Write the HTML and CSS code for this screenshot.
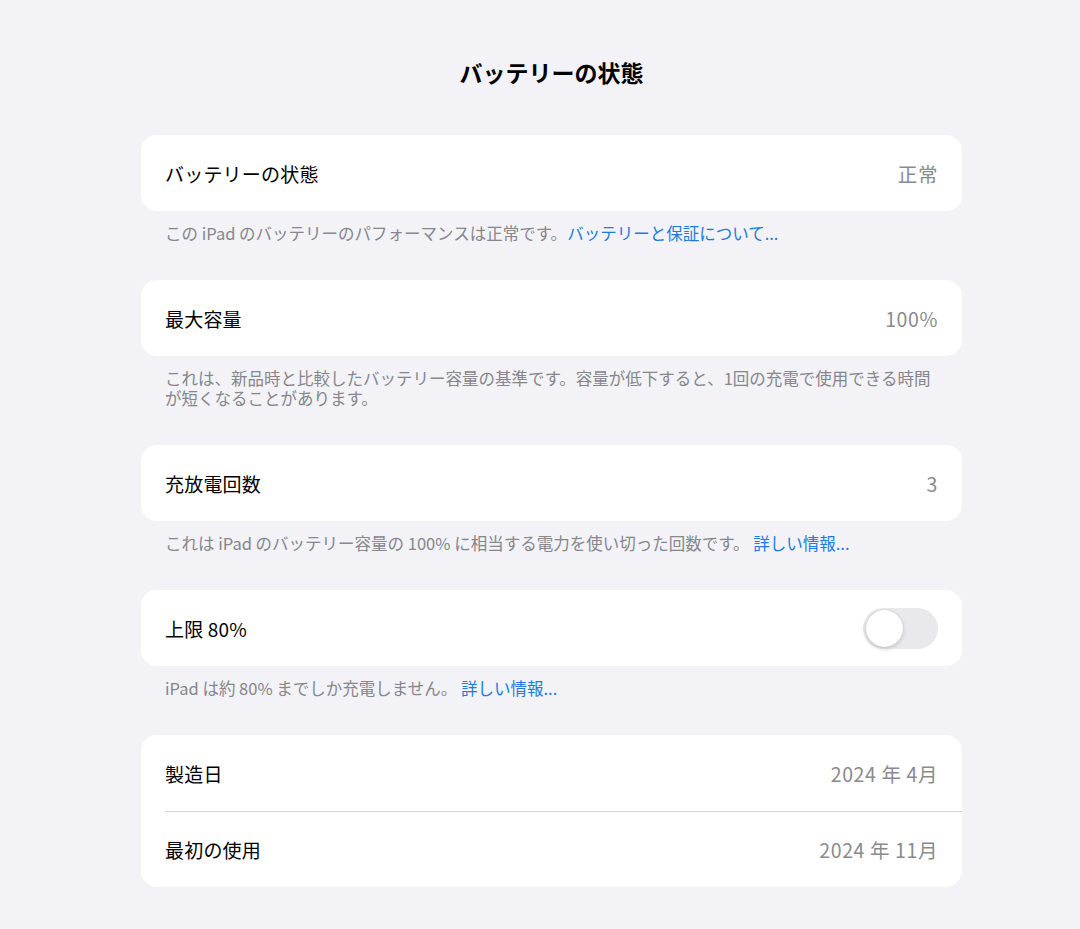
FILE: index.html
```html
<!DOCTYPE html>
<html lang="ja">
<head>
    <meta charset="UTF-8">
    <meta name="viewport" content="width=device-width, initial-scale=1.0">
    <title>バッテリーの状態</title>
    <link rel="stylesheet" href="styles.css">
</head>
<body>
    <div class="page">
        <h1 class="title">バッテリーの状態</h1>

        <div class="group">
            <div class="card">
                <div class="row">
                    <span class="label">バッテリーの状態</span>
                    <span class="value">正常</span>
                </div>
            </div>
            <p class="note">この iPad のバッテリーのパフォーマンスは正常です。<a class="link" href="#">バッテリーと保証について...</a></p>
        </div>

        <div class="group">
            <div class="card">
                <div class="row">
                    <span class="label">最大容量</span>
                    <span class="value">100%</span>
                </div>
            </div>
            <p class="note">これは、新品時と比較したバッテリー容量の基準です。容量が低下すると、1回の充電で使用できる時間が短くなることがあります。</p>
        </div>

        <div class="group">
            <div class="card">
                <div class="row">
                    <span class="label">充放電回数</span>
                    <span class="value">3</span>
                </div>
            </div>
            <p class="note">これは iPad のバッテリー容量の 100% に相当する電力を使い切った回数です。 <a class="link" href="#">詳しい情報...</a></p>
        </div>

        <div class="group">
            <div class="card">
                <div class="row">
                    <span class="label">上限 80%</span>
                    <span class="toggle"><span class="knob"></span></span>
                </div>
            </div>
            <p class="note">iPad は約 80% までしか充電しません。 <a class="link" href="#">詳しい情報...</a></p>
        </div>

        <div class="group">
            <div class="card">
                <div class="row">
                    <span class="label">製造日</span>
                    <span class="value">2024 年 4月</span>
                </div>
                <div class="row">
                    <span class="label">最初の使用</span>
                    <span class="value">2024 年 11月</span>
                </div>
            </div>
        </div>
    </div>
</body>
</html>
```

FILE: styles.css
```css
* {
    margin: 0;
    padding: 0;
    box-sizing: border-box;
}

body {
    background: #f2f2f7;
    font-family: "Noto Sans CJK JP", "Noto Sans", sans-serif;
    color: #000;
    min-height: 100vh;
}

.page {
    width: 821px;
    margin-left: 141px;
    padding-top: 56px;
}

.title {
    font-size: 23px;
    font-weight: 700;
    line-height: 32px;
    text-align: center;
    margin-bottom: 47px;
}

.group {
    margin-bottom: 37px;
}

.card {
    background: #fff;
    border-radius: 16px;
    overflow: hidden;
}

.row {
    height: 76px;
    display: flex;
    align-items: center;
    justify-content: space-between;
    padding: 0 24px;
    position: relative;
}

.row + .row::before {
    content: '';
    position: absolute;
    top: 0;
    left: 24px;
    right: 0;
    border-top: 1px solid #d6d6da;
}

.label {
    font-size: 19px;
    letter-spacing: 0.2px;
}

.value {
    font-size: 19.5px;
    letter-spacing: 0.6px;
    color: #8a8a8e;
}

.note {
    font-size: 16.5px;
    line-height: 20px;
    color: #86868b;
    padding: 12px 24px 0;
}

.link {
    color: #1c7ae0;
    text-decoration: none;
}

.toggle {
    width: 75px;
    height: 41px;
    border-radius: 21px;
    background: #e9e9eb;
    display: flex;
    align-items: center;
    padding: 0 3px;
}

.knob {
    width: 37px;
    height: 37px;
    border-radius: 50%;
    background: #fff;
    box-shadow: 0 2px 5px rgba(0, 0, 0, 0.15), 0 0 1px rgba(0, 0, 0, 0.2);
}
```
